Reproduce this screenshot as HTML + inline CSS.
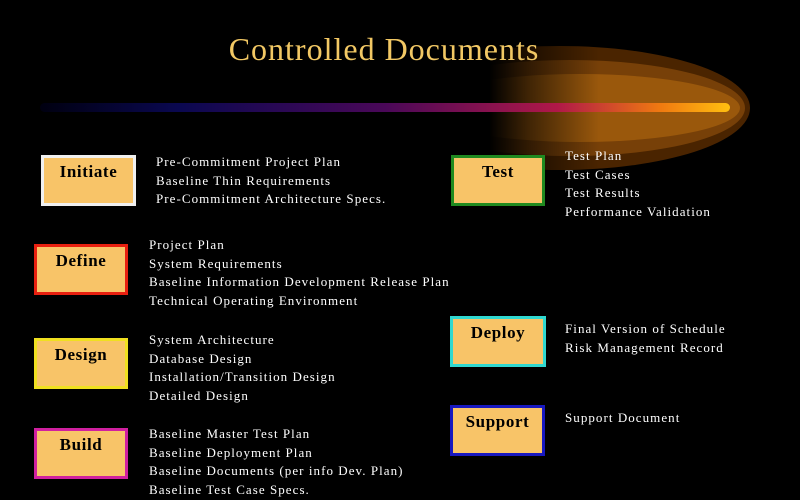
<!DOCTYPE html>
<html><head><style>
html,body{margin:0;padding:0;background:#000;width:800px;height:500px;overflow:hidden}
body{position:relative;font-family:"Liberation Serif",serif}
.t{position:absolute;left:0;width:768px;top:31px;text-align:center;color:#f2c864;font-size:32px;letter-spacing:1px}
.box{position:absolute;box-sizing:border-box;background:#f8c468;border:3px solid;color:#000;font-weight:bold;font-size:17px;text-align:center;padding-top:4px;letter-spacing:0.6px}
.txt{position:absolute;color:#fff;font-size:13px;line-height:18.6px;letter-spacing:1.05px;white-space:nowrap}
</style></head><body>
<svg width="800" height="500" style="position:absolute;left:0;top:0">
<defs>
<linearGradient id="fade" x1="0" x2="1"><stop offset="0" stop-color="#000" stop-opacity="1"/><stop offset="0.35" stop-color="#000" stop-opacity="0.6"/><stop offset="1" stop-color="#000" stop-opacity="0"/></linearGradient>
<linearGradient id="b" x1="0" x2="1">
<stop offset="0" stop-color="#000010"/>
<stop offset="0.2" stop-color="#0a0850"/>
<stop offset="0.5" stop-color="#4a0858"/>
<stop offset="0.75" stop-color="#b01848"/>
<stop offset="0.9" stop-color="#f07a10"/>
<stop offset="1" stop-color="#ffc010"/>
</linearGradient>
</defs>
<ellipse cx="560" cy="108" rx="190" ry="62" fill="#4a2400"/>
<ellipse cx="570" cy="108" rx="175" ry="48" fill="#774008"/>
<ellipse cx="580" cy="108" rx="160" ry="34" fill="#9a580c"/>
<rect x="360" y="40" width="130" height="140" fill="#000"/>
<rect x="489" y="40" width="110" height="140" fill="url(#fade)"/>
<rect x="40" y="103" width="690" height="9" rx="4.5" fill="url(#b)"/>
</svg>
<div class="t">Controlled Documents</div>

<div class="box" style="left:41px;top:155px;width:95px;height:51px;border-color:#f0f0f0">Initiate</div>
<div class="txt" style="left:156px;top:153px">Pre-Commitment Project Plan<br>Baseline Thin Requirements<br>Pre-Commitment Architecture Specs.</div>

<div class="box" style="left:34px;top:244px;width:94px;height:51px;border-color:#e82010">Define</div>
<div class="txt" style="left:149px;top:236px">Project Plan<br>System Requirements<br>Baseline Information Development Release Plan<br>Technical Operating Environment</div>

<div class="box" style="left:34px;top:338px;width:94px;height:51px;border-color:#f0e020">Design</div>
<div class="txt" style="left:149px;top:331px">System Architecture<br>Database Design<br>Installation/Transition Design<br>Detailed Design</div>

<div class="box" style="left:34px;top:428px;width:94px;height:51px;border-color:#d020a0">Build</div>
<div class="txt" style="left:149px;top:425px">Baseline Master Test Plan<br>Baseline Deployment Plan<br>Baseline Documents (per info Dev. Plan)<br>Baseline Test Case Specs.</div>

<div class="box" style="left:451px;top:155px;width:94px;height:51px;border-color:#208a20">Test</div>
<div class="txt" style="left:565px;top:147px">Test Plan<br>Test Cases<br>Test Results<br>Performance Validation</div>

<div class="box" style="left:450px;top:316px;width:96px;height:51px;border-color:#30d8d0">Deploy</div>
<div class="txt" style="left:565px;top:320px">Final Version of Schedule<br>Risk Management Record</div>

<div class="box" style="left:450px;top:405px;width:95px;height:51px;border-color:#1818c0">Support</div>
<div class="txt" style="left:565px;top:409px">Support Document</div>
</body></html>
